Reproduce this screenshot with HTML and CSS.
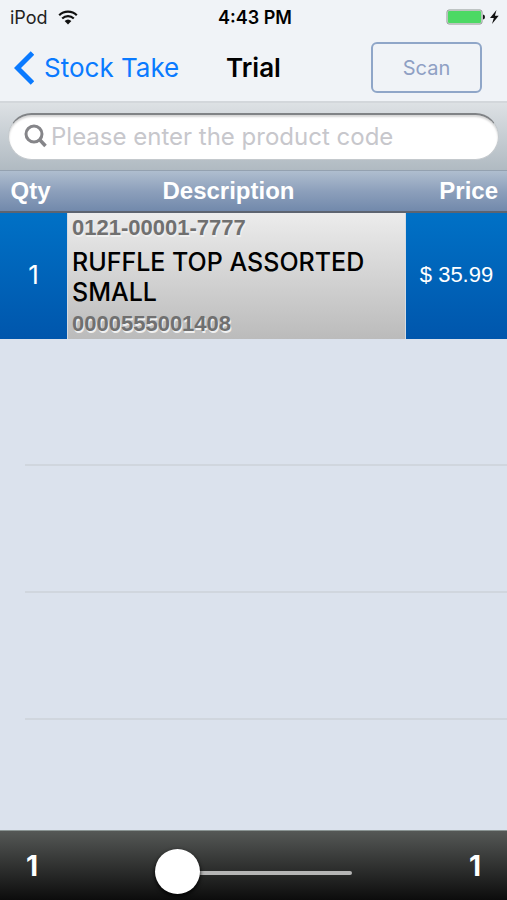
FILE: index.html
```
<!DOCTYPE html>
<html lang="en">
  <head>
    <meta charset="UTF-8" />
    <meta name="viewport" content="width=device-width, initial-scale=1.0" />
    <title>Trial</title>
    <link rel="stylesheet" href="styles.css">
  </head>

  <body>
    <header class="top">
      <div class="status">
        <div class="carrier">
          <span>iPod</span>
          <svg class="wifi" viewBox="0 0 20 15" width="20" height="15">
            <path d="M1.2 5.2a12.6 12.6 0 0 1 17.6 0M4.2 8.5a8.4 8.4 0 0 1 11.6 0" fill="none" stroke="#111" stroke-width="2.2" />
            <path d="M6.6 11a5 5 0 0 1 6.8 0L10 14.4z" fill="#111" />
          </svg>
        </div>
        <span class="time">4:43 PM</span>
        <svg class="battery" viewBox="0 0 54 18" width="54" height="18">
          <rect x="1" y="2" width="35" height="14" rx="2" fill="#e9f5ec" stroke="#8d9490" />
          <rect x="2" y="3" width="33" height="12" rx="1" fill="#4cd964" />
          <path d="M37 6.500q2 .3 2 2.500t-2 2.500z" fill="#111" />
          <path d="M50.500 2l-6.500 8h3.800l-1.800 6 6.700-8.200h-3.800z" fill="#111" />
        </svg>
      </div>
      <nav class="nav">
        <a class="back" href="#">
          <svg viewBox="0 0 20 34" width="20" height="34">
            <path d="M18.500 2L3.500 17l15 15" fill="none" stroke="#0a7aff" stroke-width="5" />
          </svg>
          <span>Stock Take</span>
        </a>
        <h1>Trial</h1>
        <button class="scan" type="button">Scan</button>
      </nav>
    </header>

    <form class="search">
      <label class="search-box">
        <svg viewBox="0 0 24 24" width="24" height="24">
          <circle cx="10" cy="10" r="8" fill="none" stroke="#858589" stroke-width="3" />
          <path d="M15.500 15.500l6 6.500" stroke="#858589" stroke-width="3.500" />
        </svg>
        <input type="text" placeholder="Please enter the product code" aria-label="Product code" />
      </label>
    </form>

    <table class="items">
      <thead>
        <tr>
          <th class="qty">Qty</th>
          <th class="desc">Description</th>
          <th class="price">Price</th>
        </tr>
      </thead>
      <tbody>
        <tr>
          <td class="qty">1</td>
          <td class="desc">
            <p class="code">0121-00001-7777</p>
            <p class="name">RUFFLE TOP ASSORTED SMALL</p>
            <p class="code">0000555001408</p>
          </td>
          <td class="price">$ 35.99</td>
        </tr>
      </tbody>
    </table>

    <main class="empty">
      <div class="line"></div>
      <div class="line"></div>
      <div class="line"></div>
    </main>

    <footer class="bar">
      <span>1</span>
      <input class="slider" type="range" min="1" max="100" value="1" aria-label="Item" />
      <span>1</span>
    </footer>
  </body>
</html>
```

FILE: styles.css
```
* {
  margin: 0;
  padding: 0;
  box-sizing: border-box;
}

body {
  display: flex;
  flex-direction: column;
  min-height: 100vh;
  background: #dbe2ed;
  font-family: Inter, "Liberation Sans", sans-serif;
  color: #000;
}

.top {
  background: #f0f3f7;
  border-bottom: 2px solid #d3d7db;
}

.status {
  display: grid;
  grid-template-columns: 1fr auto 1fr;
  align-items: center;
  height: 34px;
  padding: 0 7px 0 10px;
  font-size: 18px;
}

.carrier {
  display: flex;
  align-items: center;
  gap: 10px;
  color: #222;
}

.time {
  font-weight: 600;
}

.battery {
  justify-self: end;
}

.nav {
  display: grid;
  grid-template-columns: 1fr auto 1fr;
  align-items: center;
  height: 67px;
  padding: 0 14px;
}

.back {
  display: flex;
  align-items: center;
  gap: 10px;
  color: #0a7aff;
  font-size: 26px;
  text-decoration: none;
  white-space: nowrap;
}

.nav h1 {
  font-size: 26px;
  font-weight: 600;
}

.scan {
  justify-self: end;
  width: 111px;
  height: 51px;
  margin-right: 11px;
  border: 2px solid #8fa6c8;
  border-radius: 6px;
  background: transparent;
  color: #8fa0c4;
  font-family: inherit;
  font-size: 20px;
}

.search {
  padding: 10px 8px;
  background: linear-gradient(#dde1e4, #b0bac2);
}

.search-box {
  display: flex;
  align-items: center;
  gap: 3px;
  height: 47px;
  padding: 0 16px 2px 15px;
  border: 1px solid #c4c9cd;
  border-top: 2px solid #808386;
  border-radius: 24px;
  background: #fff;
  box-shadow: inset 0 2px 2px #d5d5d5;
}

.search-box input {
  flex: 1;
  min-width: 0;
  border: 0;
  outline: 0;
  background: transparent;
  font-family: inherit;
  font-size: 24px;
}

.search-box input::placeholder {
  color: #c7c7cc;
}

.items {
  width: 100%;
  border-collapse: separate;
  border-spacing: 0;
  table-layout: fixed;
  font-family: "Liberation Sans", sans-serif;
}

.items thead tr {
  background: linear-gradient(#b1bfd0, #8c9fbb 50%, #6f87aa);
}

.items th {
  height: 43px;
  border-top: 1px solid #94a1b0;
  border-bottom: 2px solid #5d6470;
  color: #fff;
  font-size: 24px;
}

.items .qty {
  width: 67px;
}

.items .price {
  width: 101px;
}

.items th.qty {
  padding-right: 6px;
}

.items th.desc {
  padding-right: 16px;
}

.items th.price {
  padding-right: 9px;
  text-align: right;
}

.items td {
  height: 126px;
  color: #fff;
  text-align: center;
}

.items td.qty,
.items td.price {
  padding-bottom: 3px;
  background: linear-gradient(#0071c6, #0056ac);
}

.items td.qty {
  font-family: Inter, "Liberation Sans", sans-serif;
  font-size: 26px;
}

.items td.price {
  font-size: 22px;
}

.items td.desc {
  padding: 0 4px;
  border-left: 1px solid #d5dbe2;
  border-right: 1px solid #d5dbe2;
  background: linear-gradient(#ececec, #bbb);
  text-align: left;
}

.code {
  color: #707070;
  font-size: 22px;
  font-weight: bold;
  line-height: 30px;
  text-shadow: 1px 2px 0 #f0f0f0;
}

.name {
  padding: 4px 0 2px;
  color: #000;
  font-family: Inter, "Liberation Sans", sans-serif;
  font-size: 25px;
  font-weight: 500;
  line-height: 30px;
}

.empty {
  flex: 1;
}

.line {
  height: 127px;
  margin-left: 25px;
  border-bottom: 2px solid #d0d6de;
}

.bar {
  display: flex;
  align-items: center;
  justify-content: space-between;
  height: 70px;
  padding: 0 26px;
  border-top: 1px solid #8b9594;
  background: linear-gradient(#555856, #0c0c0c);
  color: #fff;
  font-size: 28px;
  font-weight: bold;
}

.slider {
  width: 197px;
  height: 46px;
  margin-top: 14px;
  appearance: none;
  background: transparent;
}

.slider::-webkit-slider-runnable-track {
  height: 4px;
  border-radius: 2px;
  background: #b5b5b5;
}

.slider::-webkit-slider-thumb {
  width: 45px;
  height: 45px;
  margin-top: -22px;
  appearance: none;
  border-radius: 50%;
  background: #fff;
  box-shadow: 0 2px 4px #000;
}
```
